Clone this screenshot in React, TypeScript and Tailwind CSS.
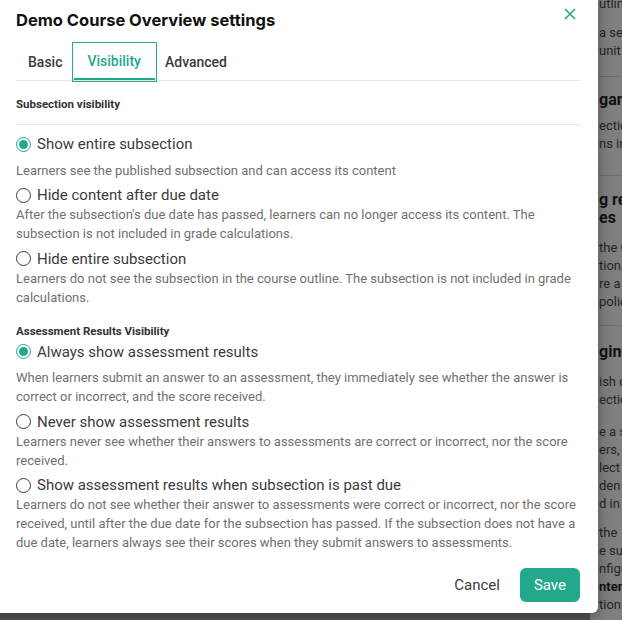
import React from "react";

const TEAL = "#22a98b";

function Radio({ checked }: { checked?: boolean }) {
  if (checked) {
    return (
      <span className="flex h-[15px] w-[15px] shrink-0 items-center justify-center rounded-full border-[1.5px] border-[#22a98b] bg-white">
        <span className="h-[9px] w-[9px] rounded-full bg-[#22a98b]" />
      </span>
    );
  }
  return <span className="h-[15px] w-[15px] shrink-0 rounded-full border-[1.3px] border-[#3a3a3a] bg-white" />;
}

function Option({
  label,
  desc,
  checked,
  first,
}: {
  label: string;
  desc: string;
  checked?: boolean;
  first?: boolean;
}) {
  return (
    <div className={first ? "" : "mt-[5.5px]"}>
      <label className="flex h-5 items-center gap-[6px] text-[15px] leading-5 text-[#3b3b3b]">
        <Radio checked={checked} />
        <span>{label}</span>
      </label>
      <p className={`${checked ? "mt-[6.5px]" : ""} text-[13px] leading-[19px] text-[#707070]`}>{desc}</p>
    </div>
  );
}

export default function App() {
  return (
    <div className="relative h-[620px] w-[622px] overflow-hidden font-['Roboto',sans-serif]">
      {/* page behind the overlay */}
      <div className="flex h-full">
        <div className="w-[590px] shrink-0 bg-[#555555]" />
        <div className="min-w-0 flex-1 overflow-hidden bg-[#7f7f7f] pl-[9px] text-[13px] leading-[18px] text-[#262626] whitespace-nowrap">
          <p className="mt-[-5px]">utline</p>
          <p className="mt-[11px]">a section</p>
          <p>unit in</p>
          <div className="mt-[16px] h-px bg-[#6c6c6c]" />
          <p className="mt-[12px] text-[16px] font-bold leading-[22px] text-[#111]">ganiz</p>
          <p className="mt-[6px]">ection</p>
          <p>ns in the</p>
          <div className="mt-[22px] h-px bg-[#6c6c6c]" />
          <p className="mt-[15px] text-[16px] font-bold leading-[18px] text-[#111]">g re</p>
          <p className="text-[16px] font-bold leading-[18px] text-[#111]">es</p>
          <p className="mt-[12px]">the C</p>
          <p>tion t</p>
          <p>re a</p>
          <p>polic</p>
          <div className="mt-[14px] h-px bg-[#6c6c6c]" />
          <p className="mt-[17px] text-[16px] font-bold leading-[18px] text-[#111]">ging</p>
          <p className="mt-[12px]">ish d</p>
          <p>ection</p>
          <p className="mt-[14px]">e a s</p>
          <p>ers,</p>
          <p>lect t</p>
          <p>den s</p>
          <p>d in g</p>
          <p className="mt-[11px]">the</p>
          <p>e sub</p>
          <p>nfigur</p>
          <p className="font-bold text-[#111]">nten</p>
          <p>tion r</p>
        </div>
      </div>

      {/* modal */}
      <div className="absolute left-[-10px] top-[-10px] w-[608px] rounded-md bg-white pb-[11px] pl-[26px] pr-[18px] pt-[18px] shadow-[0_4px_14px_rgba(0,0,0,0.35)]">
        <div className="flex items-start justify-between">
          <h2 className="font-['Inter',sans-serif] text-[16.5px] font-bold leading-6 text-[#111]">
            Demo Course Overview settings
          </h2>
          <button className="mr-[4px] h-3 w-3">
            <svg viewBox="0 0 12 12" width="12" height="12" fill="none" stroke={TEAL} strokeWidth="1.6">
              <path d="M1 1L11 11M11 1L1 11" />
            </svg>
          </button>
        </div>

        <div className="mt-[12px] flex border-b border-[#e8e6e3] text-[14px] font-medium">
          <button className="h-9 px-3 text-[#3b3b3b]">Basic</button>
          <button className="-mb-px h-9 border-b-2 border-[#22a98b] pl-[13px] pr-[14px] text-[#22a98b] outline outline-1 outline-offset-[1px] outline-[#2aa98d]">
            Visibility
          </button>
          <button className="h-9 px-[10px] text-[#3b3b3b]">Advanced</button>
        </div>

        <div className="border-b border-[#e8e6e3] pb-[12px] pt-[15px] text-[11.5px] font-bold leading-4 text-[#333]">
          Subsection visibility
        </div>

        <div className="mt-[9px]">
          <Option
            first
            checked
            label="Show entire subsection"
            desc="Learners see the published subsection and can access its content"
          />
          <Option
            label="Hide content after due date"
            desc="After the subsection's due date has passed, learners can no longer access its content. The subsection is not included in grade calculations."
          />
          <Option
            label="Hide entire subsection"
            desc="Learners do not see the subsection in the course outline. The subsection is not included in grade calculations."
          />
        </div>

        <div className="mt-[16px] text-[11.5px] font-bold leading-4 text-[#333]">Assessment Results Visibility</div>

        <div className="mt-[3px]">
          <Option
            first
            checked
            label="Always show assessment results"
            desc="When learners submit an answer to an assessment, they immediately see whether the answer is correct or incorrect, and the score received."
          />
          <Option
            label="Never show assessment results"
            desc="Learners never see whether their answers to assessments are correct or incorrect, nor the score received."
          />
          <Option
            label="Show assessment results when subsection is past due"
            desc="Learners do not see whether their answer to assessments were correct or incorrect, nor the score received, until after the due date for the subsection has passed. If the subsection does not have a due date, learners always see their scores when they submit answers to assessments."
          />
        </div>

        <div className="mt-[16px] flex items-center justify-end gap-2">
          <button className="h-[34px] px-3 text-[15px] text-[#3b3b3b]">Cancel</button>
          <button className="h-[34px] rounded-md bg-[#22a98b] px-[14px] text-[15px] text-white">Save</button>
        </div>
      </div>
    </div>
  );
}
